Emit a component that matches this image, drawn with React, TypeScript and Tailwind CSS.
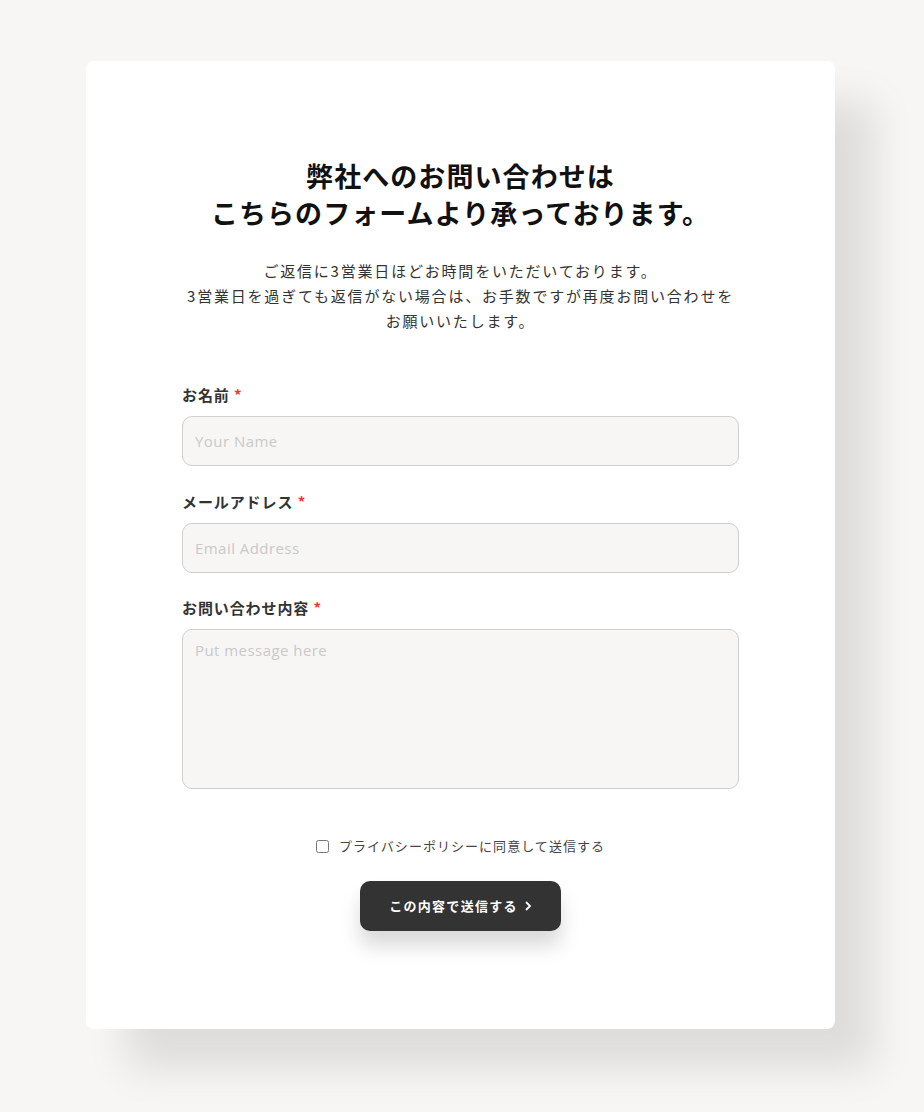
import { useState } from "react";

const JP = "font-['Noto_Sans_CJK_JP','Noto_Sans',sans-serif]";

function Label({ text }: { text: string }) {
  return (
    <label className="block text-[15px] leading-[20px] font-bold tracking-[0.06em] text-[#333]">
      {text} <span className="text-[#e63b3b]">*</span>
    </label>
  );
}

const field =
  "mt-[11px] block w-full rounded-[10px] border border-[#cfcfcf] bg-[#f7f6f4] px-[12px] text-[15px] tracking-[0.03em] font-['Open_Sans',sans-serif] text-[#333] placeholder:text-[#c9c9c9] outline-none";

export default function App() {
  const [agree, setAgree] = useState(false);

  return (
    <div className={`min-h-[1112px] bg-[#f7f6f4] pt-[61px] pb-[84px] ${JP}`}>
      <div className="ml-[86px] w-[749px] rounded-[8px] bg-white px-[96px] pt-[96px] pb-[98px] shadow-[40px_40px_40px_rgba(0,0,0,0.1)]">
        <h1 className="text-center text-[27px] leading-[37px] font-bold tracking-[0.04em] text-[#111]">
          弊社へのお問い合わせは
          <br />
          こちらのフォームより承っております。
        </h1>
        <p className="mt-[27px] text-center text-[15px] leading-[25px] tracking-[0.12em] text-[#333]">
          ご返信に3営業日ほどお時間をいただいております。
          <br />
          3営業日を過ぎても返信がない場合は、お手数ですが再度お問い合わせを
          <br />
          お願いいたします。
        </p>

        <form className="mt-[52px]" onSubmit={(e) => e.preventDefault()}>
          <Label text="お名前" />
          <input className={`${field} h-[50px]`} placeholder="Your Name" />

          <div className="mt-[26px]">
            <Label text="メールアドレス" />
          </div>
          <input className={`${field} h-[50px]`} placeholder="Email Address" />

          <div className="mt-[25px]">
            <Label text="お問い合わせ内容" />
          </div>
          <textarea
            className={`${field} h-[160px] resize-none py-[9px] px-[10px]`}
            placeholder="Put message here"
          />

          <label className="mt-[48px] flex items-center justify-center gap-[10px] text-[13px] leading-[18px] tracking-[0.08em] text-[#444]">
            <input
              type="checkbox"
              checked={agree}
              onChange={(e) => setAgree(e.target.checked)}
              className="h-[13px] w-[13px]"
            />
            プライバシーポリシーに同意して送信する
          </label>

          <div className="mt-[26px] flex justify-center">
            <button
              type="submit"
              className="flex h-[50px] w-[201px] items-center justify-center gap-[6px] rounded-[10px] bg-[#333] text-[13px] font-bold tracking-[0.1em] text-white shadow-[0_15px_20px_rgba(0,0,0,0.15)]"
            >
              この内容で送信する
              <svg width="8" height="10" viewBox="0 0 8 10" fill="none">
                <path d="M2 1l4 4-4 4" stroke="white" strokeWidth="1.8" />
              </svg>
            </button>
          </div>
        </form>
      </div>
    </div>
  );
}
